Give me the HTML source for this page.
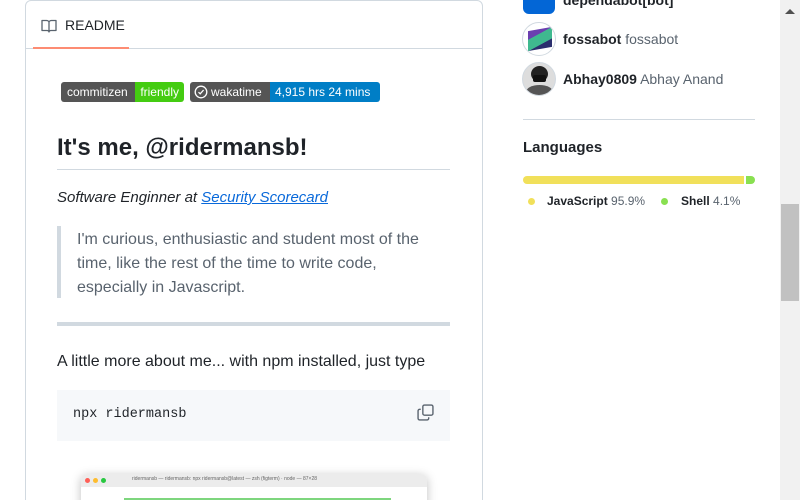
<!DOCTYPE html>
<html style="overflow:hidden;height:500px"><head><meta charset="utf-8"><style>
*{margin:0;padding:0;box-sizing:border-box}
body{width:800px;height:500px;overflow:hidden;background:#fff;font-family:"Liberation Sans",sans-serif;color:#1f2328;position:relative}
.a{position:absolute;white-space:nowrap}
.card{position:absolute;left:25px;top:0;width:458px;height:520px;border:1px solid #d1d9e0;border-radius:6px}
.badge{position:absolute;height:20px;border-radius:3px;overflow:hidden;display:flex;font-size:12px;color:#fff;line-height:20px}
.badge span{padding:0 6px;display:block}
.av{position:absolute;left:522px;width:34px;height:34px;border-radius:50%;border:1px solid #d1d9e0;overflow:hidden}
</style></head><body>
<div class="card"></div>
<svg class="a" style="left:41px;top:18px" width="16" height="16" viewBox="0 0 16 16"><path d="M1 2.5h4.5c1.2 0 2.5.8 2.5 2V14c0-.9-1-1.5-2-1.5H1zM15 2.5h-4.5C9.3 2.5 8 3.3 8 4.5V14c0-.9 1-1.5 2-1.5h5z" fill="none" stroke="#59636e" stroke-width="1.3" stroke-linejoin="round"/></svg>
<div class="a" style="left:65px;top:17px;font-size:14px">README</div>
<div class="a" style="left:26px;top:48px;width:456px;height:1px;background:#d1d9e0"></div>
<div class="a" style="left:33px;top:47px;width:96px;height:2px;background:#fd8c73"></div>

<div class="badge" style="left:61px;top:82px;width:123px"><span style="background:#555;width:75px">commitizen</span><span style="background:#4c1;flex:1;padding:0 5px">friendly</span></div>
<div class="badge" style="left:190px;top:82px;width:190px"><span style="background:#555;padding-left:4px;width:80px">
<svg width="14" height="14" viewBox="0 0 14 14" style="vertical-align:-3px;margin-right:3px"><circle cx="7" cy="7" r="5.8" fill="none" stroke="#fff" stroke-width="1.3"/><path d="M4.5 7.2l1.7 1.6L9.6 5" fill="none" stroke="#fff" stroke-width="1.3"/></svg>wakatime</span><span style="background:#007ec6;flex:1;padding:0 5px">4,915 hrs 24 mins</span></div>

<div class="a" style="left:57px;top:134px;font-size:24px;font-weight:600">It's me, @ridermansb!</div>
<div class="a" style="left:57px;top:169px;width:393px;height:1px;background:#d1d9e0"></div>
<div class="a" style="left:57px;top:189px;font-size:15px;font-style:italic">Software Enginner at <span style="color:#0969da;text-decoration:underline">Security Scorecard</span></div>
<div class="a" style="left:57px;top:226px;width:4px;height:72px;background:#d1d9e0"></div>
<div class="a" style="left:77px;top:228px;font-size:16px;line-height:24px;color:#59636e;white-space:normal;width:350px">I'm curious, enthusiastic and student most of the time, like the rest of the time to write code, especially in Javascript.</div>
<div class="a" style="left:57px;top:322px;width:393px;height:4px;background:#d1d9e0"></div>
<div class="a" style="left:57px;top:353px;font-size:16px">A little more about me... with npm installed, just type</div>
<div class="a" style="left:57px;top:390px;width:393px;height:51px;background:#f6f8fa"></div>
<div class="a" style="left:73px;top:407px;font-family:'Liberation Mono',monospace;font-size:13.5px">npx ridermansb</div>
<svg class="a" style="left:417px;top:404px" width="17" height="17" viewBox="0 0 16 16"><rect x="5.5" y="1" width="9.5" height="9.5" rx="1.5" fill="none" stroke="#59636e" stroke-width="1.3"/><path d="M3.5 5H2.5A1.5 1.5 0 001 6.5v7A1.5 1.5 0 002.5 15h7a1.5 1.5 0 001.5-1.5v-1" fill="none" stroke="#59636e" stroke-width="1.3"/></svg>

<div class="a" style="left:81px;top:474px;width:346px;height:40px;border-radius:6px;background:#fff;box-shadow:0 2px 10px rgba(0,0,0,.25)"></div>
<div class="a" style="left:81px;top:474px;width:346px;height:13px;background:#ececec;border-radius:6px 6px 0 0"></div>
<div class="a" style="left:85px;top:478px;width:5px;height:5px;border-radius:50%;background:#fe5f57"></div>
<div class="a" style="left:93px;top:478px;width:5px;height:5px;border-radius:50%;background:#febc2e"></div>
<div class="a" style="left:101px;top:478px;width:5px;height:5px;border-radius:50%;background:#28c840"></div>
<div class="a" style="left:132px;top:476px;font-size:5px;color:#666">ridermansb — ridermansb: npx ridermansb@latest — zsh (figterm) · node — 87×28</div>
<div class="a" style="left:124px;top:498px;width:267px;height:2px;background:#7ed67e"></div>

<div class="av" style="top:-17px;background:#fff;border:none;border-radius:6px"><div style="position:absolute;left:1px;top:0;width:32px;height:31px;background:#0366d6;border-radius:6px"></div></div>
<div class="a" style="left:563px;top:-8px;font-size:14px;font-weight:600">dependabot[bot]</div>
<div class="av" style="top:22px;background:#fff"><div style="position:absolute;left:5px;top:6px;width:24px;height:20px;background:linear-gradient(160deg,#6b3fb0 30%,#3fb98f 31%,#3fb98f 70%,#2b2f6e 71%);transform:skewY(-10deg)"></div></div>
<div class="a" style="left:563px;top:31px;font-size:14px"><b style="font-weight:600">fossabot</b> <span style="color:#59636e">fossabot</span></div>
<div class="av" style="top:62px;background:#ddd"><div style="position:absolute;left:8px;top:3px;width:17px;height:16px;border-radius:50%;background:#222"></div><div style="position:absolute;left:10px;top:12px;width:13px;height:7px;background:#111;border-radius:2px"></div><div style="position:absolute;left:3px;top:22px;width:27px;height:14px;border-radius:50% 50% 0 0;background:#555"></div></div>
<div class="a" style="left:563px;top:71px;font-size:14px"><b style="font-weight:600">Abhay0809</b> <span style="color:#59636e">Abhay Anand</span></div>
<div class="a" style="left:523px;top:119px;width:232px;height:1px;background:#d1d9e0"></div>
<div class="a" style="left:523px;top:139px;font-size:15px;font-weight:600">Languages</div>
<div class="a" style="left:523px;top:176px;width:221px;height:8px;background:#f1e05a;border-radius:4px 0 0 4px"></div>
<div class="a" style="left:746px;top:176px;width:9px;height:8px;background:#89e051;border-radius:0 4px 4px 0"></div>
<div class="a" style="left:528px;top:198px;width:7px;height:7px;border-radius:50%;background:#f1e05a"></div>
<div class="a" style="left:547px;top:194px;font-size:12px"><b style="font-weight:600">JavaScript</b> <span style="color:#59636e">95.9%</span></div>
<div class="a" style="left:661px;top:198px;width:7px;height:7px;border-radius:50%;background:#89e051"></div>
<div class="a" style="left:681px;top:194px;font-size:12px"><b style="font-weight:600">Shell</b> <span style="color:#59636e">4.1%</span></div>

<div class="a" style="left:780px;top:0;width:20px;height:500px;background:#f1f1f1"></div>
<div class="a" style="left:785px;top:9px;width:0;height:0;border-left:5px solid transparent;border-right:5px solid transparent;border-bottom:5px solid #505050"></div>
<div class="a" style="left:781px;top:204px;width:18px;height:97px;background:#c1c1c1"></div>
</body></html>
